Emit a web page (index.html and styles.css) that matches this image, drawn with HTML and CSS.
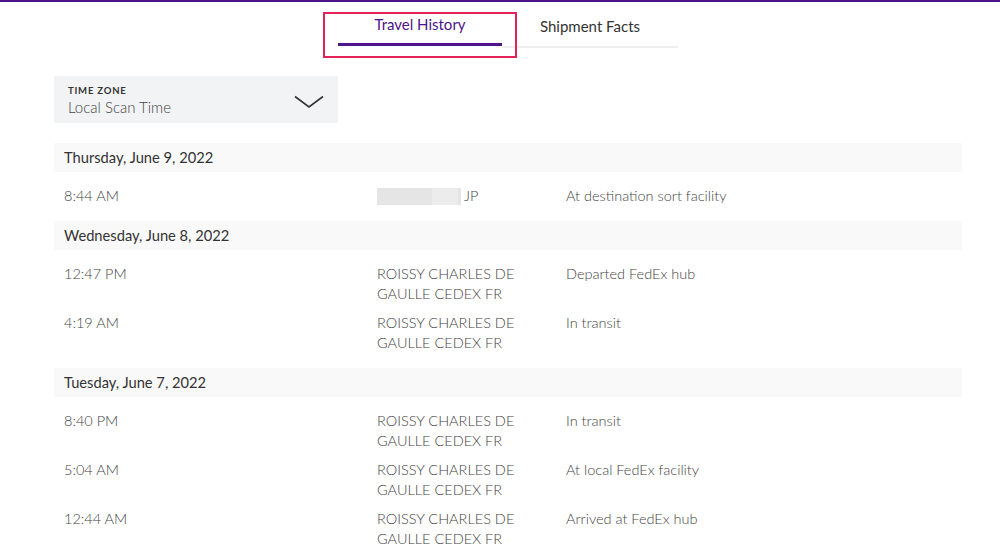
FILE: index.html
```html
<!DOCTYPE html>
<html lang="en">
<head>
<meta charset="utf-8">
<title>Travel History</title>
<link rel="stylesheet" href="styles.css">
</head>
<body>
<div class="topbar"></div>
<div class="tabs-wrap">
  <nav class="tabs">
    <div class="tab tab-active">Travel History</div>
    <div class="tab tab-other">Shipment Facts</div>
  </nav>
  <div class="highlight"></div>
</div>
<div class="content">
  <div class="tz">
    <div class="tz-text">
      <div class="tz-label">TIME ZONE</div>
      <div class="tz-value">Local Scan Time</div>
    </div>
    <svg class="chev" width="30" height="14" viewBox="0 0 30 14"><path d="M1 1.5 L15 12 L29 1.5" fill="none" stroke="#333" stroke-width="1.6"/></svg>
  </div>

  <section class="day">
    <div class="day-head">Thursday, June 9, 2022</div>
    <div class="rows">
      <div class="row"><div class="c-time">8:44 AM</div><div class="c-loc"><span class="blur"><span class="blur-b"></span></span>JP</div><div class="c-st">At destination sort facility</div></div>
    </div>
  </section>

  <section class="day">
    <div class="day-head">Wednesday, June 8, 2022</div>
    <div class="rows">
      <div class="row"><div class="c-time">12:47 PM</div><div class="c-loc">ROISSY CHARLES DE<br>GAULLE CEDEX FR</div><div class="c-st">Departed FedEx hub</div></div>
      <div class="row"><div class="c-time">4:19 AM</div><div class="c-loc">ROISSY CHARLES DE<br>GAULLE CEDEX FR</div><div class="c-st">In transit</div></div>
    </div>
  </section>

  <section class="day">
    <div class="day-head">Tuesday, June 7, 2022</div>
    <div class="rows">
      <div class="row"><div class="c-time">8:40 PM</div><div class="c-loc">ROISSY CHARLES DE<br>GAULLE CEDEX FR</div><div class="c-st">In transit</div></div>
      <div class="row"><div class="c-time">5:04 AM</div><div class="c-loc">ROISSY CHARLES DE<br>GAULLE CEDEX FR</div><div class="c-st">At local FedEx facility</div></div>
      <div class="row"><div class="c-time">12:44 AM</div><div class="c-loc">ROISSY CHARLES DE<br>GAULLE CEDEX FR</div><div class="c-st">Arrived at FedEx hub</div></div>
    </div>
  </section>
</div>
</body>
</html>
```
FILE: styles.css
```css
* { box-sizing: border-box; }
html, body { margin: 0; padding: 0; background: #fff; }
body {
  font-family: Lato, "Open Sans", Arial, sans-serif;
  color: #333;
  overflow: hidden;
  height: 560px;
}
.topbar { height: 2px; background: #4d148c; }
.tabs-wrap {
  position: relative;
  padding-top: 12px;
}
.tabs {
  display: flex;
  margin-left: 338px;
  width: 340px;
}
.tab {
  font-size: 15px;
  line-height: 20px;
  text-align: center;
  color: #333;
}
.tab-active {
  width: 164px;
  color: #4d148c;
}
.tab-active::after {
  content: "";
  display: block;
  margin-top: 9px;
  height: 3px;
  background: #4d148c;
}
.tab-other {
  flex: 1;
  padding-top: 2px;
}
.tab-other::after {
  content: "";
  display: block;
  margin-top: 10px;
  height: 2px;
  background: #efefef;
}
.highlight {
  position: absolute;
  left: 323px;
  top: 10px;
  width: 194px;
  height: 46px;
  border: 2px solid #e3225a;
}
.content { padding: 28px 38px 0 54px; }
.tz {
  width: 284px;
  height: 47px;
  background: #f2f3f5;
  display: flex;
  align-items: center;
  justify-content: space-between;
  padding: 0 14px 0 14px;
}
.tz-text { padding-top: 1px; }
.tz-label {
  font-size: 9.5px;
  font-weight: 700;
  letter-spacing: 0.8px;
  color: #333;
  line-height: 14px;
}
.tz-value {
  font-size: 15px;
  font-weight: 300;
  line-height: 19px;
  color: #444;
}
.chev { margin-top: 4px; }
.day-head {
  background: #f9f9f9;
  height: 29px;
  line-height: 29px;
  padding-left: 10px;
  font-size: 14.7px;
  color: #333;
}
.tz + .day { margin-top: 20px; }
.rows {
  display: flex;
  flex-direction: column;
  gap: 9px;
  padding: 14px 0 15px;
}
.row {
  display: grid;
  grid-template-columns: 323px 189px 1fr;
  font-size: 14.5px;
  font-weight: 300;
  line-height: 20px;
  color: #444;
}
.c-time { padding-left: 10px; }
.blur {
  display: inline-block;
  vertical-align: -4px;
  width: 84px;
  height: 17px;
  background: #e5e5e5;
  margin-right: 3px;
  position: relative;
}
.blur-b {
  position: absolute;
  left: 55px;
  top: 0;
  width: 26px;
  height: 17px;
  background: #ececec;
}
```
